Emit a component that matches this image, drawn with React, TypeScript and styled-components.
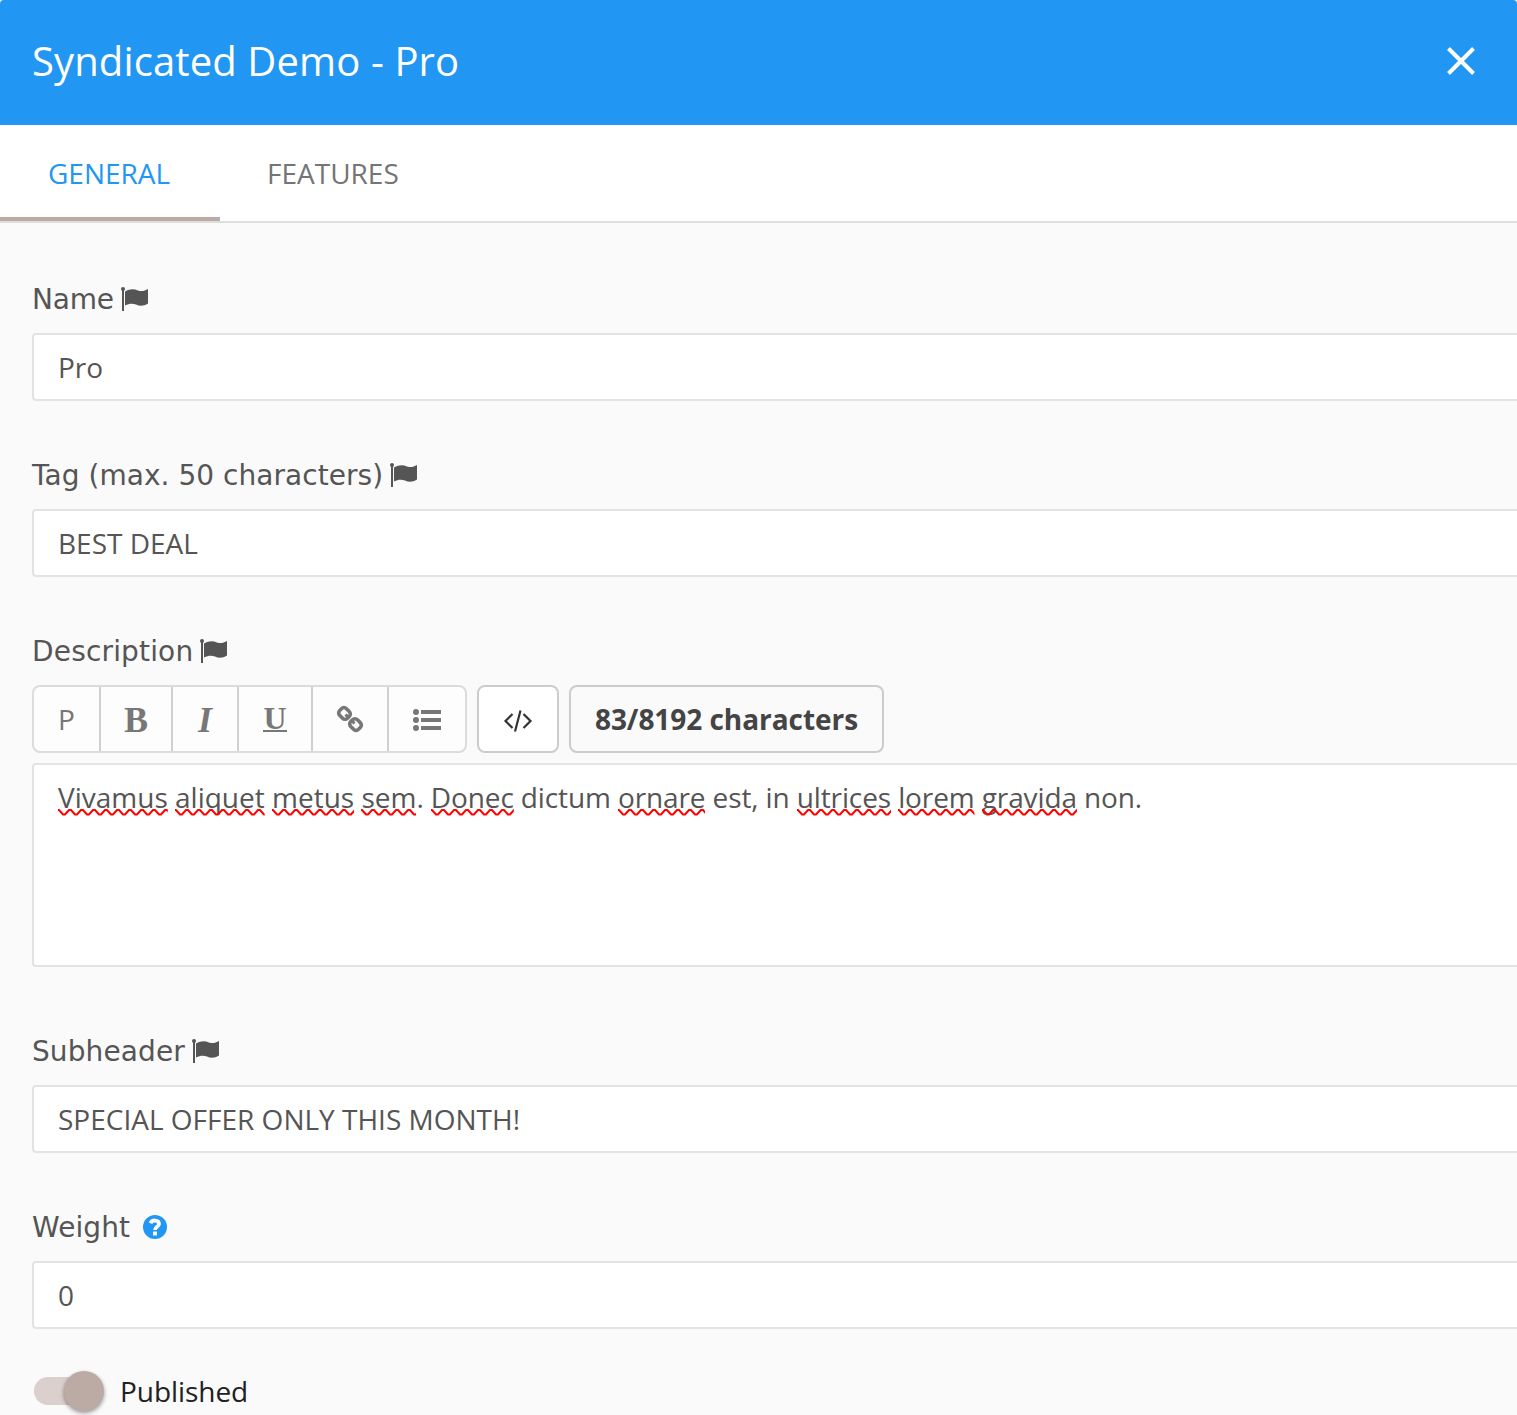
import React from "react";
import styled, { createGlobalStyle } from "styled-components";

const Global = createGlobalStyle`
  *{box-sizing:border-box}
  html{overflow:hidden}
  body{margin:0;background:#fafafa;font-family:"Open Sans",sans-serif;color:#555;font-size:28px}
`;
const Dialog = styled.div`width:100%;height:1415px;overflow:hidden;display:flex;flex-direction:column;background:#fafafa;`;
const Header = styled.header`height:125px;flex:none;background:#2196f3;border-radius:4px 4px 0 0;display:flex;align-items:center;justify-content:space-between;padding:0 40px 3px 32px;color:#fff;`;
const Title = styled.h1`margin:0;font-size:40px;font-weight:400;letter-spacing:.12px;line-height:56px;`;
const CloseButton = styled.button`border:0;background:none;padding:0;width:32px;height:32px;display:flex;color:#fff;`;
const Tabs = styled.nav`height:98px;flex:none;background:#fff;border-bottom:2px solid #dedede;display:flex;`;
const Tab = styled.button<{ $active?: boolean }>`
  height:96px;padding:${p => p.$active ? "4px 46px 0 48px" : "4px 46px 0 47px"};border:0;border-bottom:4px solid ${p => p.$active ? "#bcaaa4" : "transparent"};
  width:${p => p.$active ? 220 : 226}px;text-align:left;
  background:none;color:${p => p.$active ? "#2196f3" : "#757575"};font:400 28px "Open Sans",sans-serif;text-transform:uppercase;
`;
const Form = styled.main`padding:52px 0 0 32px;display:flex;flex-direction:column;`;
const Field = styled.section<{ $gap?: number }>`display:flex;flex-direction:column;margin-bottom:${p => p.$gap ?? 50}px;`;
const Label = styled.label<{ $track?: number }>`height:49px;margin-bottom:9px;font:28px "DejaVu Sans",sans-serif;line-height:50px;letter-spacing:${p => p.$track ?? 0}px;display:flex;align-items:center;`;
const Box = styled.div<{ $tall?: boolean }>`
  height:${p => p.$tall ? 204 : 68}px;border:2px solid #e3e3e3;border-right:0;border-radius:4px 0 0 4px;background:#fff;
  padding:12px 24px;line-height:40px;white-space:nowrap;
`;
const Toolbar = styled.div`display:flex;gap:10px;margin-bottom:10px;height:68px;`;
const Group = styled.div`display:flex;border:2px solid #dcdcdc;border-radius:8px;background:#fdfdfd;color:#777;`;
const Tool = styled.button<{ $w: number }>`width:${p => p.$w}px;border:0;border-right:2px solid #d0d0d0;background:none;padding:0;color:inherit;font:400 28px "Open Sans",sans-serif;display:flex;align-items:center;justify-content:center;&:last-child{border-right:0}`;
const CodeButton = styled.button`width:82px;border:2px solid #ccc;border-radius:8px;background:#fff;color:#333;padding:3px 0 0;display:flex;align-items:center;justify-content:center;`;
const Counter = styled.div`width:315px;border:2px solid #ccc;border-radius:8px;font-weight:700;color:#444;line-height:64px;letter-spacing:-.05px;text-align:center;white-space:nowrap;`;
const Glyph = styled.span<{ $italic?: boolean }>`
  font:${p => p.$italic ? "italic" : "normal"} 700 36px/36px "Liberation Serif",serif;padding-top:2px;
`;
const Underlined = styled.span`
  width:24px;height:26px;border-bottom:2px solid currentColor;font:700 32px/24px "Liberation Serif",serif;display:flex;justify-content:center;
`;
const Tight = styled.span`letter-spacing:-.12px;`;
const Misspelt = styled.span`position:relative;display:inline-block;`;
const Wave = styled.svg`position:absolute;left:0;top:32px;width:100%;height:7px;`;
const SwitchRow = styled.div`display:flex;align-items:center;gap:16px;color:#212121;height:42px;margin-top:-9px;letter-spacing:-.05px;`;
const Track = styled.div`width:70px;height:28px;margin-left:2px;border-radius:14px;background:linear-gradient(#dbd0cd,#dbd0cd) left/60px no-repeat;display:flex;justify-content:flex-end;align-items:center;`;
const Thumb = styled.div`width:40px;height:40px;flex:none;border-radius:50%;background:#bcaaa4;box-shadow:0 2px 4px rgba(0,0,0,.4);`;
const FlagIcon = styled.svg`margin-left:7px;`;
const HelpIcon = styled.svg`margin:0 0 2px 12.500px;`;

const Flag = () => (
  <FlagIcon width="28" height="26" viewBox="0 0 28 26" fill="currentColor">
    <circle cx="2" cy="2" r="2" /><path d="M1 3h2v21H1zM4 4.500C9 1.500 13 1.700 17 3.500C21 5 24 3.500 27 2V16.500C23 19 19 19.500 15 17.500C11 16 8 16.500 4 18.500z" />
  </FlagIcon>
);
const Bad = ({ children }: { children: string }) => (
  <Misspelt>{children}<Wave><defs><pattern id="wave" width="12" height="7" patternUnits="userSpaceOnUse"><path d="M-2 1H1L5 5.500H7L11 1H14" fill="none" stroke="#f00" strokeWidth="2" /></pattern></defs><rect width="100%" height="7" fill="url(#wave)" /></Wave></Misspelt>
);
const TextField = ({ label, value, track }: { label: string; value: string; track?: number }) => (
  <Field><Label $track={track}>{label}<Flag /></Label><Box>{value}</Box></Field>
);

export default function App() {
  return (
    <Dialog>
      <Global />
      <Header>
        <Title>Syndicated Demo - Pro</Title>
        <CloseButton aria-label="Close"><svg width="32" height="32" viewBox="0 0 32 32"><path d="M3.500 3.500L28.500 28.500M28.500 3.500L3.500 28.500" stroke="currentColor" strokeWidth="4" /></svg></CloseButton>
      </Header>
      <Tabs><Tab $active>General</Tab><Tab>Features</Tab></Tabs>
      <Form>
        <TextField label="Name" value="Pro" track={-0.2} />
        <TextField label="Tag (max. 50 characters)" value="BEST DEAL" track={0.04} />
        <Field $gap={60}>
          <Label $track={0.17}>Description<Flag /></Label>
          <Toolbar>
            <Group>
              <Tool $w={67}>P</Tool>
              <Tool $w={72}><Glyph>B</Glyph></Tool>
              <Tool $w={66}><Glyph $italic>I</Glyph></Tool>
              <Tool $w={74}><Underlined>U</Underlined></Tool>
              <Tool $w={76}><svg width="28" height="28" viewBox="0 0 28 28" fill="none" stroke="currentColor" strokeWidth="3.600"><rect x="3" y="3.700" width="11" height="9.500" rx="3.500" transform="rotate(45 8.500 8.450)" /><rect x="14" y="14.800" width="11" height="9.500" rx="3.500" transform="rotate(45 19.500 19.550)" /><path d="M9.500 9.500l3.500 3.500M15 15l3.500 3.500" strokeWidth="3" /></svg></Tool>
              <Tool $w={76}><svg width="28" height="24" viewBox="0 0 28 22" fill="currentColor"><circle cx="3" cy="4" r="3" /><circle cx="3" cy="12" r="3" /><circle cx="3" cy="20" r="3" /><path d="M8 2h20v4H8zM8 10h20v4H8zM8 18h20v4H8z" /></svg></Tool>
            </Group>
            <CodeButton><svg width="30" height="24" viewBox="0 0 30 24" fill="none" stroke="currentColor" strokeWidth="2.200"><path d="M9.500 5L2.500 12l7 7M20.500 5l7 7-7 7M17.500 1.500l-5.500 21" /></svg></CodeButton>
            <Counter>83/8192 characters</Counter>
          </Toolbar>
          <Box $tall><Bad>Vivamus</Bad> <Bad>aliquet</Bad> <Bad>metus</Bad> <Bad>sem</Bad><Tight>. <Bad>Donec</Bad> dictum <Bad>ornare</Bad> est, in <Bad>ultrices</Bad> <Bad>lorem</Bad> <Bad>gravida</Bad> non.</Tight></Box>
        </Field>
        <TextField label="Subheader" value="SPECIAL OFFER ONLY THIS MONTH!" track={0.1} />
        <Field>
          <Label $track={0.1}>Weight<HelpIcon width="24" height="24" viewBox="0 0 24 24"><circle cx="12" cy="12" r="12" fill="#2196f3" /><path d="M7.500 8.200C9 4.500 16 4.500 16 9c0 3-4 2.500-4 6M12 16.500v4" fill="none" stroke="#fff" strokeWidth="3.800" /></HelpIcon></Label>
          <Box>0</Box>
        </Field>
        <SwitchRow><Track><Thumb /></Track>Published</SwitchRow>
      </Form>
    </Dialog>
  );
}
